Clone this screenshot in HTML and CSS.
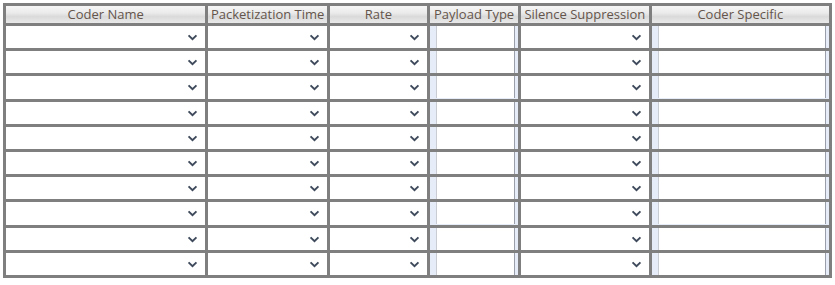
FILE: index.html
```html
<!DOCTYPE html>
<html lang="en">
<head>
    <meta charset="UTF-8">
    <title>Coders Table</title>
    <link rel="stylesheet" href="styles.css">
</head>
<body>
    <div class="frame">
        <table class="coders" id="coders">
            <colgroup>
                <col class="c-name">
                <col class="c-ptime">
                <col class="c-rate">
                <col class="c-payload">
                <col class="c-silence">
                <col class="c-specific">
            </colgroup>
            <thead>
                <tr>
                    <th>Coder Name</th>
                    <th>Packetization Time</th>
                    <th>Rate</th>
                    <th>Payload Type</th>
                    <th>Silence Suppression</th>
                    <th>Coder Specific</th>
                </tr>
            </thead>
            <tbody id="rows"></tbody>
        </table>
    </div>

    <template id="rowTpl">
        <tr>
            <td><div class="sel"><select><option></option></select><svg class="chev" viewBox="0 0 12 8"><path d="M1.5 1.5 L6 6 L10.5 1.5"/></svg></div></td>
            <td><div class="sel"><select><option></option></select><svg class="chev" viewBox="0 0 12 8"><path d="M1.5 1.5 L6 6 L10.5 1.5"/></svg></div></td>
            <td><div class="sel"><select><option></option></select><svg class="chev" viewBox="0 0 12 8"><path d="M1.5 1.5 L6 6 L10.5 1.5"/></svg></div></td>
            <td class="txt"><input type="text"></td>
            <td><div class="sel"><select><option></option></select><svg class="chev" viewBox="0 0 12 8"><path d="M1.5 1.5 L6 6 L10.5 1.5"/></svg></div></td>
            <td class="txt"><input type="text"></td>
        </tr>
    </template>

    <script>
        // ten empty coder rows
        const rows = document.getElementById('rows');
        const tpl = document.getElementById('rowTpl');
        for (let i = 0; i < 10; i++) {
            rows.appendChild(tpl.content.cloneNode(true));
        }
    </script>
</body>
</html>
```

FILE: styles.css
```css
body {
    margin: 0;
    font-family: "Open Sans", Arial, sans-serif;
    background: #ffffff;
}
.frame {
    padding: 3px 3px 0 3px;
}
.coders {
    table-layout: fixed;
    width: 829px;
    border-collapse: separate;
    border-spacing: 3px 3px;
    background-color: #7f7f7f;
}
.c-name { width: 199px; }
.c-ptime { width: 118px; }
.c-rate { width: 97px; }
.c-payload { width: 88px; }
.c-silence { width: 127px; }
.c-specific { width: 177px; }

.coders thead tr {
    height: 17px;
}
.coders th {
    padding: 0;
    font-size: 13px;
    font-weight: normal;
    color: #64554c;
    white-space: nowrap;
    overflow: hidden;
    line-height: 17px;
    background: linear-gradient(#f6f6f6 0%, #ebebeb 40%, #dadada 62%, #e9e9e9 100%);
}
.coders tbody tr {
    height: 22.2px;
}
.coders td {
    padding: 0;
    background-color: #ffffff;
}
.sel {
    position: relative;
    height: 22px;
}
.sel select {
    appearance: none;
    -webkit-appearance: none;
    display: block;
    width: 100%;
    height: 22px;
    margin: 0;
    border: none;
    border-radius: 1px;
    background: #ffffff;
    font-family: inherit;
    font-size: 12px;
}
.chev {
    position: absolute;
    right: 7px;
    top: 8px;
    width: 11px;
    height: 7px;
    pointer-events: none;
}
.chev path {
    fill: none;
    stroke: #3e4a5b;
    stroke-width: 2.2;
}
.coders td.txt {
    background-color: #e6edf8;
    padding: 0 3px 0 6px;
}
.txt input {
    display: block;
    box-sizing: border-box;
    width: 100%;
    height: 22px;
    margin: 0;
    padding: 0 3px;
    border: none;
    border-left: 1px solid #c9ccd3;
    border-right: 1px solid #9a9ea8;
    background: #ffffff;
    font-family: inherit;
    font-size: 12px;
}
```
